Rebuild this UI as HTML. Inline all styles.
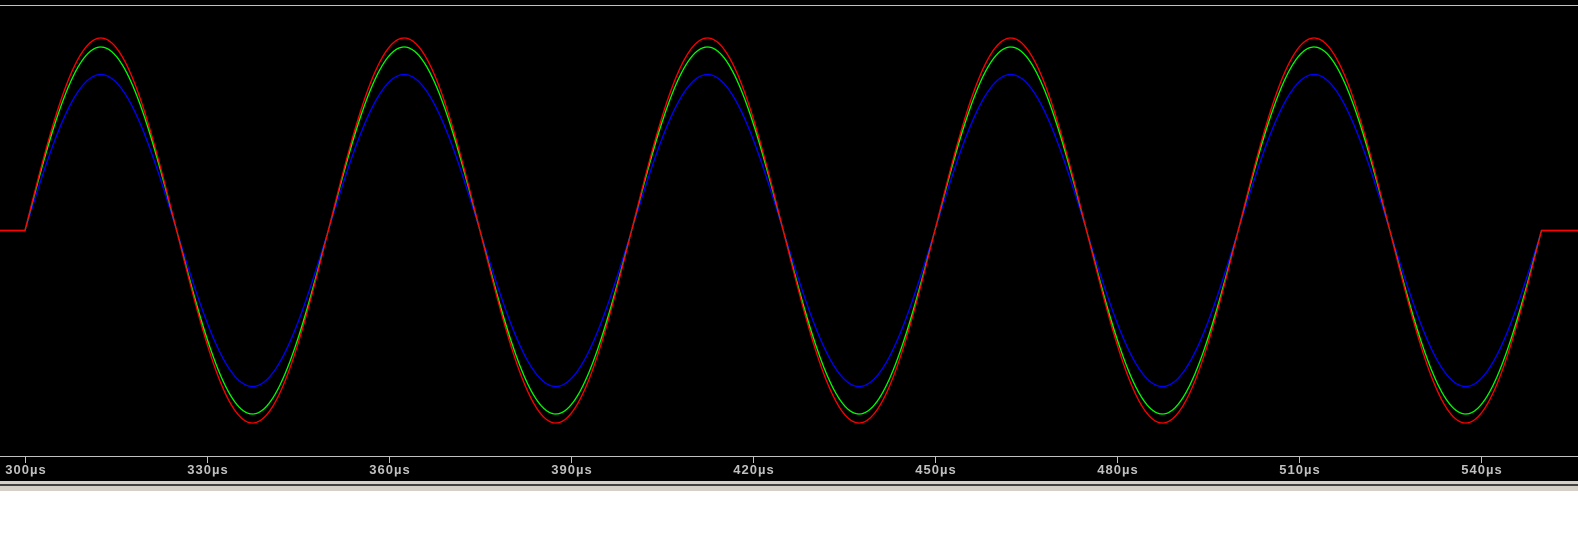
<!DOCTYPE html>
<html><head><meta charset="utf-8"><style>
html,body{margin:0;padding:0;width:1578px;height:540px;overflow:hidden;background:#fff}
#c{position:absolute;left:0;top:0;width:1578px;height:481px;background:#000}
.l{position:absolute;height:1px;background:#c0c0c0}
.lab{position:absolute;top:462px;font:bold 13px "Liberation Sans",sans-serif;color:#c0c0c0;transform:translateX(-50%);letter-spacing:1px}
.t{position:absolute;top:456px;width:1px;height:7px;background:#c0c0c0}
</style></head><body>
<div id="c"></div>
<div class="l" style="left:0;top:5px;width:1578px"></div>
<div class="l" style="left:0;top:456px;width:1578px"></div>
<div style="position:absolute;left:0;top:481px;width:1578px;height:3px;background:#d4d0c8"></div>
<div style="position:absolute;left:0;top:484px;width:1578px;height:2px;background:#404040"></div>
<div style="position:absolute;left:0;top:486px;width:1578px;height:5px;background:#d4d0c8"></div>
<svg id="s" width="1578" height="481" style="position:absolute;left:0;top:0"></svg>
<div id="labs"></div>
<script>
var x0=25,p=303.3,cy=230.5,end=x0+5*p;
var cols=[["#0000ff",156],["#00ff00",183.5],["#ff0000",192.5]];
var h="";
cols.forEach(function(c){
 var d="M0 "+cy+" L"+x0+" "+cy;
 for(var x=x0;x<=end;x+=1){d+=" L"+x+" "+(cy-c[1]*Math.sin(2*Math.PI*(x-x0)/p)).toFixed(1);}
 d+=" L"+end.toFixed(1)+" "+cy+" L1578 "+cy;
 h+='<path d="'+d+'" fill="none" stroke="'+c[0]+'" stroke-width="1.3"/>';
});
document.getElementById("s").innerHTML=h;
var L="";
for(var k=0;k<9;k++){var x=Math.round(25+k*182);L+='<div class="t" style="left:'+x+'px"></div><div class="lab" style="left:'+(x+1)+'px">'+(300+30*k)+'µs</div>';}
document.getElementById("labs").innerHTML=L;
</script>
</body></html>
